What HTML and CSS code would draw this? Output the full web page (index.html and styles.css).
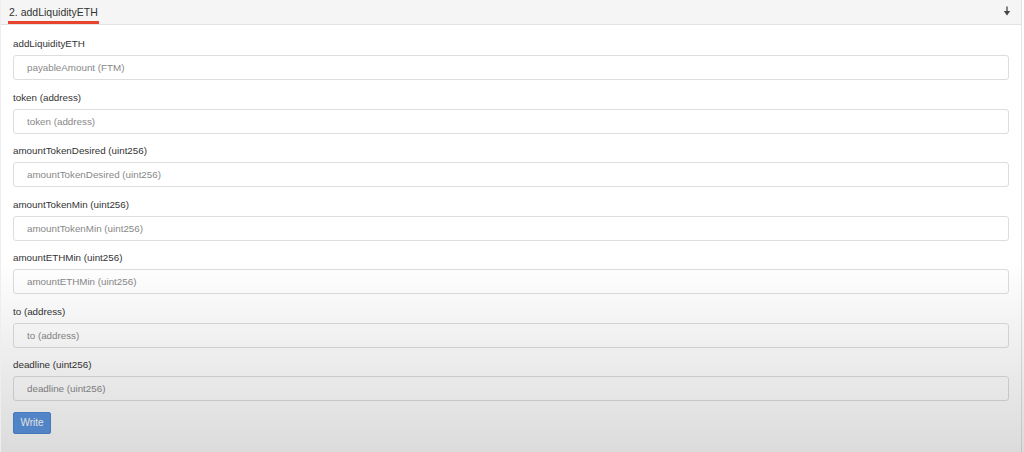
FILE: index.html
```html
<!DOCTYPE html>
<html lang="en">

<head>
    <meta charset="UTF-8">
    <meta name="viewport" content="width=device-width, initial-scale=1.0">
    <title>addLiquidityETH</title>
    <link rel="stylesheet" href="styles.css">
</head>

<body>
    <div class="card">
        <div class="card-header">
            <span class="title">2. addLiquidityETH</span>
            <svg class="arrow" width="8" height="10" viewBox="0 0 8 10">
                <path d="M4 0.5 V6" stroke="#444" stroke-width="1.3" fill="none"/>
                <path d="M0.8 5 H7.2 L4 9.5 Z" fill="#444"/>
            </svg>
        </div>
        <div class="card-body">
            <div class="field">
                <label>addLiquidityETH</label>
                <input type="text" placeholder="payableAmount (FTM)">
            </div>
            <div class="field">
                <label>token (address)</label>
                <input type="text" placeholder="token (address)">
            </div>
            <div class="field">
                <label>amountTokenDesired (uint256)</label>
                <input type="text" placeholder="amountTokenDesired (uint256)">
            </div>
            <div class="field">
                <label>amountTokenMin (uint256)</label>
                <input type="text" placeholder="amountTokenMin (uint256)">
            </div>
            <div class="field">
                <label>amountETHMin (uint256)</label>
                <input type="text" placeholder="amountETHMin (uint256)">
            </div>
            <div class="field">
                <label>to (address)</label>
                <input type="text" placeholder="to (address)">
            </div>
            <div class="field">
                <label>deadline (uint256)</label>
                <input type="text" placeholder="deadline (uint256)">
            </div>
            <button class="btn-write">Write</button>
        </div>
    </div>
</body>

</html>
```

FILE: styles.css
```css
body {
    margin: 0;
    padding: 0;
    background: #fff;
    font-family: "Liberation Sans", Arial, sans-serif;
    color: #333;
    height: 452px;
    overflow: hidden;
}

.card {
    position: relative;
    width: 1022px;
    height: 452px;
    border-right: 1px solid #e3e3e3;
    border-left: 1px solid #eee;
    box-sizing: border-box;
}

/* dim fade over the lower part of the card */
.card::after {
    content: "";
    position: absolute;
    left: 0;
    right: -4px;
    top: 260px;
    bottom: 0;
    background: linear-gradient(to bottom, rgba(0, 0, 0, 0), rgba(0, 0, 0, 0.14));
    pointer-events: none;
}

.card-header {
    height: 25px;
    background: #f5f5f5;
    border-bottom: 1px solid #e2e2e2;
    display: flex;
    align-items: center;
    justify-content: space-between;
    padding: 0 10px 0 7px;
    box-sizing: border-box;
}

.title {
    font-size: 10.5px;
    color: #333;
    padding: 0 1px 3px;
    border-bottom: 3px solid #e8432d;
    margin-top: 6px;
}

.arrow {
    display: block;
    margin-top: -2px;
}

.card-body {
    padding: 12px 12px 0 12px;
}

.field {
    display: flex;
    flex-direction: column;
    margin-bottom: 10.5px;
}

.field label {
    font-size: 9.8px;
    height: 13px;
    line-height: 13px;
    margin-bottom: 5px;
    color: #333;
}

.field input {
    height: 25px;
    box-sizing: border-box;
    border: 1px solid #ddd;
    border-radius: 3px;
    padding: 0 13px;
    font-size: 9.8px;
    font-family: "Liberation Sans", Arial, sans-serif;
    outline: none;
    background: #fff;
}

.field input::placeholder {
    color: #888;
}

.btn-write {
    margin-top: 0;
    width: 38px;
    height: 22px;
    border: 1px solid #4f88d6;
    border-radius: 2px;
    background: #5c96e2;
    color: #fff;
    font-size: 10px;
    font-family: "Liberation Sans", Arial, sans-serif;
    padding: 0;
}
```
